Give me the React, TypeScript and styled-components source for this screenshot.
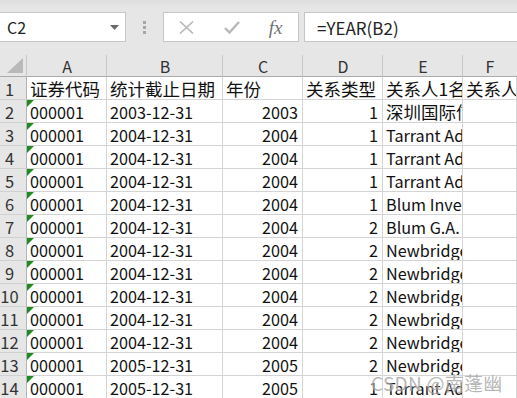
import React from 'react';
import styled, { createGlobalStyle } from 'styled-components';

const GlobalStyle = createGlobalStyle`
	html, body {
		margin: 0;
		padding: 0;
		width: 517px;
		height: 398px;
		overflow: hidden;
		background: #ffffff;
	}
	body {
		font-family: "Noto Sans CJK SC", "Liberation Sans", sans-serif;
		color: #1a1a1a;
	}
`;

const Page = styled.div`
	position: relative;
	width: 517px;
	height: 398px;
	overflow: hidden;
`;

const Toolbar = styled.div`
	height: 55px;
	box-sizing: border-box;
	padding-top: 12px;
	display: flex;
	align-items: flex-start;
	background: linear-gradient(#dedede 0px, #e6e6e6 8px, #e6e6e6 100%);
`;

const Box = styled.div`
	height: 30px;
	box-sizing: border-box;
	background: #ffffff;
	border: 1px solid #c6c6c6;
`;

const NameBox = styled(Box)`
	width: 127px;
	margin-left: -1px;
	display: flex;
	align-items: center;
	justify-content: space-between;
	padding: 0 6px 0 7px;
	font-size: 16px;
	color: #222;
`;

const Grip = styled.div`
	width: 37px;
	height: 30px;
	display: flex;
	align-items: center;
	justify-content: center;
`;

const FormulaButtons = styled(Box)`
	width: 136px;
	display: grid;
	grid-template-columns: repeat(3, 45px);
	align-items: center;
	justify-items: center;
`;

const FxLabel = styled.span`
	font-family: "Liberation Serif", "DejaVu Serif", serif;
	font-style: italic;
	font-size: 19px;
	color: #707070;
	line-height: 1;
	padding-right: 2px;
`;

const FormulaInput = styled(Box)`
	flex: 1;
	margin-left: 5px;
	margin-right: -1px;
	display: flex;
	align-items: center;
	padding-left: 12px;
	font-size: 17px;
	color: #222;
`;

const Sheet = styled.div`
	display: grid;
	grid-template-columns: 27px 80px 116px 80px 80px 80px 1fr;
	grid-template-rows: 22px;
	grid-auto-rows: 23px;
`;

const Corner = styled.div`
	background: #e6e6e6;
	border-right: 1px solid #b4b4b4;
	border-bottom: 1px solid #ababab;
	box-sizing: border-box;
	display: flex;
	align-items: flex-end;
	padding: 0 0 3px 7px;
`;

const ColHead = styled.div`
	background: #e6e6e6;
	box-sizing: border-box;
	border-left: 1px solid #c8c8c8;
	border-bottom: 1px solid #ababab;
	margin-left: -1px;
	text-align: center;
	font-size: 16px;
	line-height: 22px;
	color: #333;
`;

const RowHead = styled.div`
	background: #e6e6e6;
	box-sizing: border-box;
	border-right: 1px solid #b4b4b4;
	border-bottom: 1px solid #d0d0d0;
	padding: 2px 7px 0 0;
	text-align: center;
	font-size: 16.5px;
	line-height: 21px;
	color: #333;
	overflow: hidden;
`;

const Cell = styled.div<{ $align?: 'left' | 'right'; $flag?: boolean; $cjk?: boolean }>`
	position: relative;
	box-sizing: border-box;
	border-right: 1px solid #d4d4d4;
	border-bottom: 1px solid #d4d4d4;
	padding: ${({ $cjk }) => ($cjk ? '1px' : '2px')} 4px 0
		${({ $align }) => ($align === 'right' ? '2px' : '3px')};
	text-align: ${({ $align }) => $align || 'left'};
	font-size: ${({ $cjk }) => ($cjk ? '17.5px' : '16.2px')};
	line-height: 21px;
	white-space: nowrap;
	overflow: hidden;
	color: #111;
	&::before {
		content: '';
		display: ${({ $flag }) => ($flag ? 'block' : 'none')};
		position: absolute;
		left: 0;
		top: 0;
		border-top: 7px solid #1f8a1f;
		border-right: 7px solid transparent;
	}
`;

const Watermark = styled.div`
	position: absolute;
	left: 371px;
	top: 370px;
	font-size: 19px;
	line-height: 26px;
	color: rgba(120, 120, 120, 0.55);
	text-shadow: 0 0 2px rgba(255, 255, 255, 0.9);
	letter-spacing: 0.3px;
	pointer-events: none;
`;

type Row = {
	code: string;
	date: string;
	year: string;
	type: string;
	name: string;
	cjk?: boolean;
};

const rows: Row[] = [
	{ code: '000001', date: '2003-12-31', year: '2003', type: '1', name: '深圳国际信托投资公司', cjk: true },
	{ code: '000001', date: '2004-12-31', year: '2004', type: '1', name: 'Tarrant Advisors' },
	{ code: '000001', date: '2004-12-31', year: '2004', type: '1', name: 'Tarrant Advisors' },
	{ code: '000001', date: '2004-12-31', year: '2004', type: '1', name: 'Tarrant Advisors' },
	{ code: '000001', date: '2004-12-31', year: '2004', type: '1', name: 'Blum Investments' },
	{ code: '000001', date: '2004-12-31', year: '2004', type: '2', name: 'Blum G.A.' },
	{ code: '000001', date: '2004-12-31', year: '2004', type: '2', name: 'Newbridge' },
	{ code: '000001', date: '2004-12-31', year: '2004', type: '2', name: 'Newbridge' },
	{ code: '000001', date: '2004-12-31', year: '2004', type: '2', name: 'Newbridge' },
	{ code: '000001', date: '2004-12-31', year: '2004', type: '2', name: 'Newbridge' },
	{ code: '000001', date: '2004-12-31', year: '2004', type: '2', name: 'Newbridge' },
	{ code: '000001', date: '2005-12-31', year: '2005', type: '2', name: 'Newbridge' },
	{ code: '000001', date: '2005-12-31', year: '2005', type: '1', name: 'Tarrant Advisors' },
];

const columns = ['A', 'B', 'C', 'D', 'E', 'F'];
const titles = ['证券代码', '统计截止日期', '年份', '关系类型', '关系人1名称', '关系人2名称'];

function App() {
	return (
		<Page>
			<GlobalStyle />
			<Toolbar>
				<NameBox>
					<span>C2</span>
					<svg width="9" height="5" viewBox="0 0 9 5">
						<path d="M0 0 L9 0 L4.5 5 Z" fill="#6a6a6a" />
					</svg>
				</NameBox>
				<Grip>
					<svg width="3" height="13" viewBox="0 0 3 13">
						<rect x="0" y="0" width="3" height="3" fill="#a6a6a6" />
						<rect x="0" y="5" width="3" height="3" fill="#a6a6a6" />
						<rect x="0" y="10" width="3" height="3" fill="#a6a6a6" />
					</svg>
				</Grip>
				<FormulaButtons>
					<svg width="15" height="13" viewBox="0 0 15 13">
						<path d="M1 0.5 L14 12.5 M14 0.5 L1 12.5" stroke="#b8b8b8" strokeWidth="1.6" fill="none" />
					</svg>
					<svg width="16" height="13" viewBox="0 0 16 13">
						<path d="M1 7 L5.5 11.5 L15 1" stroke="#b8b8b8" strokeWidth="2.4" fill="none" />
					</svg>
					<FxLabel>fx</FxLabel>
				</FormulaButtons>
				<FormulaInput>=YEAR(B2)</FormulaInput>
			</Toolbar>
			<Sheet>
				<Corner>
					<svg width="16" height="15" viewBox="0 0 16 15">
						<path d="M16 0 L16 15 L0 15 Z" fill="#b9b9b9" />
					</svg>
				</Corner>
				{columns.map((c) => (
					<ColHead key={c}>{c}</ColHead>
				))}
				<RowHead>1</RowHead>
				{titles.map((t) => (
					<Cell key={t} $cjk>
						{t}
					</Cell>
				))}
				{rows.map((r, i) => (
					<React.Fragment key={i}>
						<RowHead>{i + 2}</RowHead>
						<Cell $flag>{r.code}</Cell>
						<Cell>{r.date}</Cell>
						<Cell $align="right">{r.year}</Cell>
						<Cell $align="right">{r.type}</Cell>
						<Cell $cjk={r.cjk}>{r.name}</Cell>
						<Cell />
					</React.Fragment>
				))}
			</Sheet>
			<Watermark>CSDN @南蓬幽</Watermark>
		</Page>
	);
}

export default App;
